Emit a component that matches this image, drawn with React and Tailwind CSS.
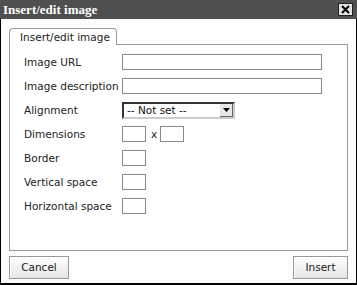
import React from 'react';

const font = { fontFamily: '"DejaVu Sans", Verdana, sans-serif' };

const Row = ({ label, children }) => (
  <div className="flex items-center h-[24px]">
    <span className="w-[98px] shrink-0 whitespace-nowrap text-[10.5px] text-[#222] leading-none">{label}</span>
    {children}
  </div>
);

const TextBox = ({ w }) => (
  <div className={`h-[16px] shrink-0 border border-[#888] bg-white ${w}`}></div>
);

const App = () => {
  return (
    <div className="w-[357px] h-[285px] bg-black overflow-hidden" style={font}>
      {/* Title bar */}
      <div className="h-[19px] bg-[#4f4f4f] flex items-center justify-between pl-[3px] pr-[4px]">
        <span className="text-white font-bold text-[13px] leading-none" style={{ fontFamily: '"Liberation Serif", "Times New Roman", serif' }}>
          Insert/edit image
        </span>
        <div className="w-[15px] h-[13px] bg-[#e2e2e2] border border-[#222] flex items-center justify-center">
          <svg width="9" height="9" viewBox="0 0 9 9">
            <path d="M1 1 L8 8 M8 1 L1 8" stroke="#000" strokeWidth="2" />
          </svg>
        </div>
      </div>

      {/* Body */}
      <div className="h-[264px] mx-[1px] bg-[#fdfdfd] pl-[8px] pr-[8px] pt-[9px] flex flex-col">
        {/* Tab */}
        <div className="flex">
          <div className="w-[108px] h-[17px] border border-b-0 border-[#999] rounded-t-[4px] bg-white flex items-center pl-[10px] text-[10.5px] text-[#222] leading-none whitespace-nowrap relative z-10 -mb-[1px]">
            Insert/edit image
          </div>
        </div>

        {/* Panel */}
        <div className="h-[207px] border border-[#999] bg-white pl-[14px] pt-[5px]">
          <Row label="Image URL"><TextBox w="w-[200px]" /></Row>
          <Row label="Image description"><TextBox w="w-[200px]" /></Row>
          <Row label="Alignment">
            <div className="w-[113px] h-[17px] border-2 border-t-[#333] border-l-[#333] border-r-[#ccc] border-b-[#ccc] bg-white flex items-center justify-between pl-[3px]">
              <span className="text-[10.5px] leading-none text-[#111] whitespace-pre">-- Not set --</span>
              <div className="w-[13px] h-[13px] bg-[#e6e6e6] border-r border-b border-[#666] flex items-center justify-center">
                <svg width="7" height="4" viewBox="0 0 7 4"><path d="M0 0 H7 L3.5 4 Z" fill="#000" /></svg>
              </div>
            </div>
          </Row>
          <Row label="Dimensions">
            <TextBox w="w-[24px]" />
            <span className="text-[10.5px] text-[#222] leading-none ml-[5px] mr-[3px]">x</span>
            <TextBox w="w-[24px]" />
          </Row>
          <Row label="Border"><TextBox w="w-[24px]" /></Row>
          <Row label="Vertical space"><TextBox w="w-[24px]" /></Row>
          <Row label="Horizontal space"><TextBox w="w-[24px]" /></Row>
        </div>

        {/* Buttons */}
        <div className="flex justify-between mt-[5px]">
          <button className="w-[60px] h-[23px] border border-[#999] bg-gradient-to-b from-white to-[#e4e4e4] text-[10.5px] text-[#222] leading-none shadow-[inset_1px_1px_0_#fff]">
            Cancel
          </button>
          <button className="w-[55px] h-[23px] border border-[#999] bg-gradient-to-b from-white to-[#e4e4e4] text-[10.5px] text-[#222] leading-none shadow-[inset_1px_1px_0_#fff]">
            Insert
          </button>
        </div>
      </div>
    </div>
  );
};

export default App;
